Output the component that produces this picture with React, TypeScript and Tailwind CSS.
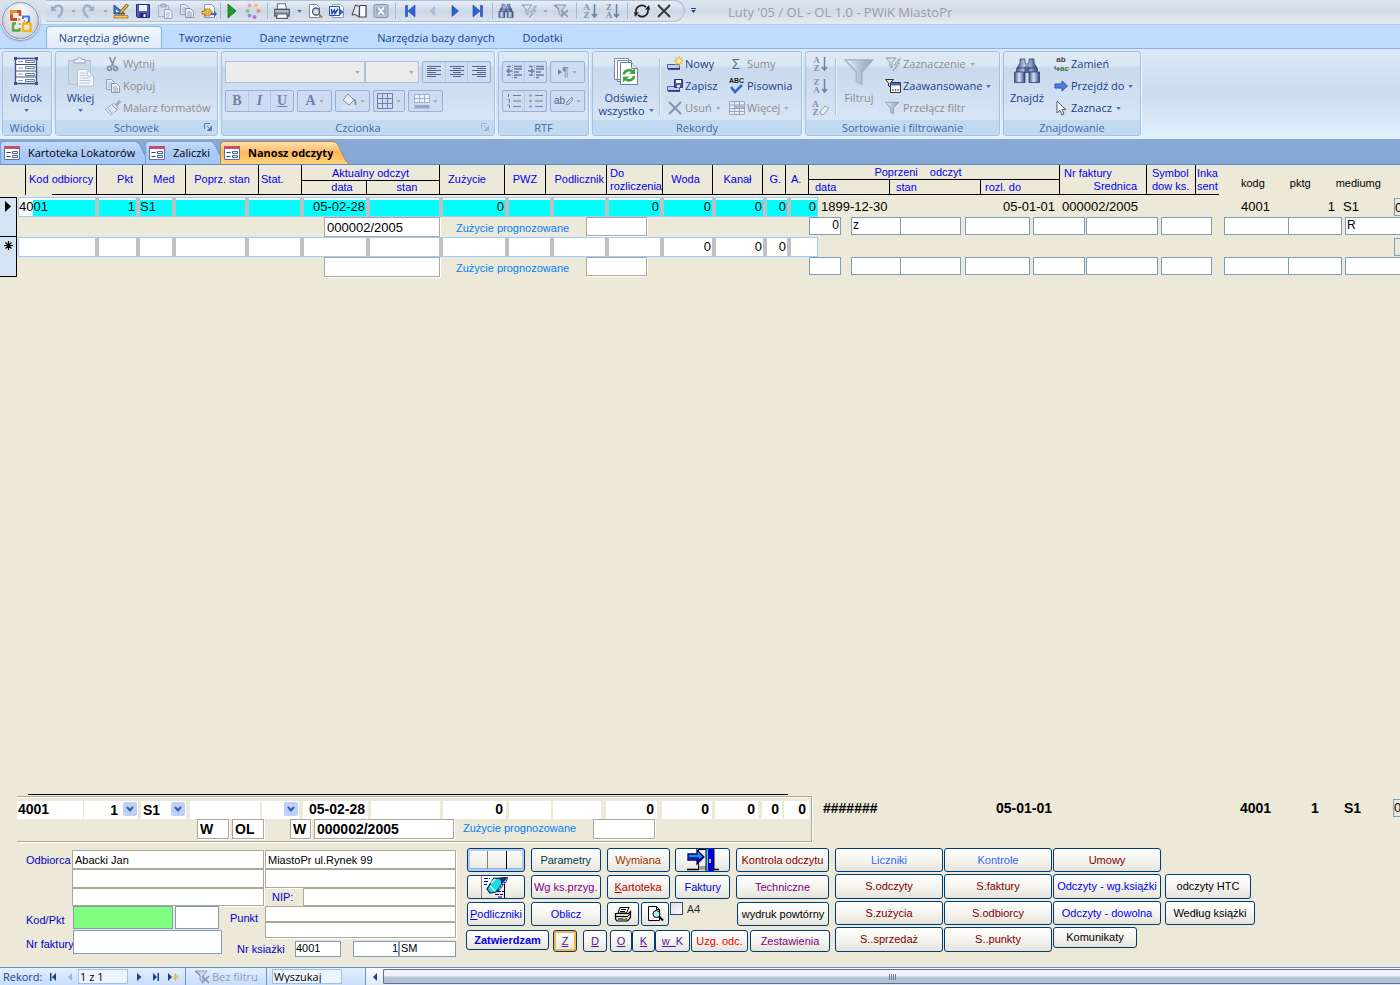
import type { ReactNode } from "react";

/* ---------- shared class strings ---------- */
const RIBBON_FONT = "font-['Open_Sans','Noto_Sans',sans-serif]";
const SUNKEN = "border-t border-l border-[#aca899] shadow-[1px_1px_0_#fff,inset_-1px_-1px_0_#aca899] bg-white";
const FLAT = "border border-[#7f9db9] bg-white";

/* ---------- icons ---------- */
type IconProps = { children: ReactNode; vb?: string; className?: string };
const Svg = ({ children, vb = "0 0 16 16", className = "size-4" }: IconProps) => (
  <svg viewBox={vb} className={`${className} shrink-0`} fill="none" aria-hidden="true">
    {children}
  </svg>
);
const Caret = ({ className = "text-[#4a6fae]" }: { className?: string }) => (
  <svg viewBox="0 0 6 4" className={`h-[3px] w-[5px] shrink-0 ${className}`} aria-hidden="true">
    <path d="M0 0h6L3 4z" fill="currentColor" />
  </svg>
);

const Undo = () => (
  <Svg>
    <path d="M2 2.500v5.500h6z" fill="#9aabc6" />
    <path d="M4 6C6 3 9 2 11 3C14.500 4.500 14 10 9 14.500" stroke="#9aabc6" strokeWidth="2.400" />
  </Svg>
);
const Redo = () => (
  <Svg>
    <path d="M13 2.500v5.500H7.500z" fill="#9fb0c8" />
    <path d="M11 6C9 3 6.500 2 4.500 3C1.500 5 2 10 7 14.500" stroke="#9fb0c8" strokeWidth="2.400" />
  </Svg>
);
const Design = () => (
  <Svg>
    <path d="M1 2v9h11z" fill="#4274c8" stroke="#23509e" />
    <path d="M3 6.500V9h3z" fill="#fff" />
    <path d="M7 8.500 13.500 1l2 1.500L9 10l-3 1z" fill="#f7b13c" stroke="#5b4312" strokeWidth=".8" />
    <path d="M1 12.500h14v2.500H1z" fill="#f7c64a" stroke="#a3741b" strokeWidth=".8" />
  </Svg>
);
const Save = () => (
  <Svg>
    <path d="M1.500 1.500h13v13h-12l-1-1z" fill="#5358c4" stroke="#2a2c86" />
    <path d="M4 2h8v6H4z" fill="#eef1fb" />
    <path d="M4.500 10h7v4.500h-7z" fill="#2b2d6c" />
    <path d="M8.500 11h2v3h-2z" fill="#e8ebf7" />
  </Svg>
);
const PasteSm = () => (
  <Svg>
    <path d="M1.500 2.500h10v11h-10z" fill="#d3dbe6" stroke="#a3b0c2" />
    <path d="M4 1h5v3H4z" fill="#b8c2d0" stroke="#8e9cb0" strokeWidth=".7" />
    <path d="M7.500 6.500h5l2.500 2.500v6.500H7.500z" fill="#eef2f8" stroke="#95a4ba" />
    <path d="M9 10h4M9 12h4M9 14h3" stroke="#a9b6ca" />
  </Svg>
);
const Copy = () => (
  <Svg>
    <path d="M1.500 1.500h5l3 3v7h-8z" fill="#e6ebf3" stroke="#8fa0ba" />
    <path d="M3 5h4M3 7h4M3 9h4" stroke="#a2b0c6" />
    <path d="M6.500 5.500h5l3 3v6h-8z" fill="#eef2f8" stroke="#8497b6" />
    <path d="M8 9h4M8 11h5M8 13h5" stroke="#8fa0ba" />
  </Svg>
);
const Export = () => (
  <Svg>
    <path d="M3.500 1.500h7l3 3v10h-10z" fill="#fbfcff" stroke="#8696b5" />
    <path d="M1 8h3V6h5v2h2v3H9v2H4v-2H1z" fill="#f6c443" stroke="#9a6f14" strokeWidth=".8" />
    <path d="M5.500 8.500h2v2h-2z" fill="#fff" stroke="#9a6f14" strokeWidth=".6" />
    <path d="M10 10h3V7.500l3 3.500-3 3.500V12h-3z" fill="#3f63b8" />
  </Svg>
);
const Run = () => (
  <Svg>
    <path d="M4 1v14l8-7z" fill="#1e9a2c" stroke="#0c6a18" strokeWidth=".8" />
  </Svg>
);
const Dots = () => (
  <Svg>
    <circle cx="4.500" cy="2.500" r="2" fill="#f4a0a0" />
    <circle cx="11" cy="2.500" r="2" fill="#f6c55f" />
    <circle cx="2.500" cy="8" r="2" fill="#88c86c" />
    <circle cx="13.500" cy="8" r="2" fill="#f08a8a" />
    <circle cx="4.500" cy="12.500" r="2" fill="#6aa2ea" />
    <circle cx="9.500" cy="14" r="2" fill="#d860d8" />
  </Svg>
);
const Printer = () => (
  <Svg className="size-[18px]">
    <path d="M4 1.500h7l1 5H4z" fill="#fff" stroke="#6a7484" />
    <path d="M1.500 6.500h13v6h-13z" fill="#8d96a5" stroke="#4c5564" />
    <path d="M2 8h12" stroke="#d4d9e0" />
    <path d="M4 10.500h8l1 4H3z" fill="#fff" stroke="#5b6474" />
  </Svg>
);
const Preview = () => (
  <Svg>
    <path d="M2.500 1.500h7l3 3v10h-10z" fill="#fff" stroke="#77869c" />
    <circle cx="9" cy="8.500" r="3.500" fill="#cbe4f8" stroke="#46536a" strokeWidth="1.300" />
    <path d="m11.500 11 3.500 3.500" stroke="#b07a3c" strokeWidth="2" />
  </Svg>
);
const Word = () => (
  <Svg>
    <path d="M3.500 1.500h8l3 3v10h-11z" fill="#fff" stroke="#8aa0c4" />
    <path d="M.500 3.500h10v9H.500z" fill="#e6eefb" stroke="#2f56a6" />
    <path d="m2.500 6 .500 4.500L5.500 7l.500 3.500L9 6" stroke="#1f4aa6" strokeWidth="1.400" />
    <path d="m11 6 4 3-4 3z" fill="#3668c6" />
  </Svg>
);
const Book = () => (
  <Svg>
    <path d="M8.500 3v11H15V2.500H9.500z" fill="#fff" stroke="#3c4656" strokeWidth="1.200" />
    <path d="M8.500 3.500 4.500 2 1 12l3-.5L8 14z" fill="#dfe5ee" stroke="#3c4656" />
  </Svg>
);
const Excel = () => (
  <Svg>
    <rect x="1" y="1.500" width="14" height="13" rx="1.500" fill="#b9c4d4" stroke="#8292ab" />
    <path d="M3 4h10v8H3z" fill="#9dabc0" />
    <path d="m5 4.500 6 7M11 4.500l-6 7" stroke="#fff" strokeWidth="1.800" />
  </Svg>
);
const First = () => (
  <Svg>
    <path d="M3.500 2.500h2v11h-2zM13 2v12L6 8z" fill="#2b63d4" stroke="#1946a8" strokeWidth=".6" />
  </Svg>
);
const Prev = () => (
  <Svg>
    <path d="M11 3v10L5.500 8z" fill="#a9bbd6" />
  </Svg>
);
const Next = () => (
  <Svg>
    <path d="M5 2.500v11l6.500-5.500z" fill="#2b63d4" stroke="#1946a8" strokeWidth=".6" />
  </Svg>
);
const Last = () => (
  <Svg>
    <path d="M10.500 2.500h2v11h-2zM3 2v12l7-6z" fill="#2b63d4" stroke="#1946a8" strokeWidth=".6" />
  </Svg>
);
const Binoculars = ({ className = "size-4" }: { className?: string }) => (
  <Svg className={className} vb="0 0 28 28">
    <defs>
      <linearGradient id="bino" x1="0" x2="1" y1="0" y2="0">
        <stop offset="0" stopColor="#3b5488" />
        <stop offset=".45" stopColor="#d7e2f6" />
        <stop offset="1" stopColor="#2c4374" />
      </linearGradient>
    </defs>
    <path d="M7 2h5v4h1v4h2V6h1V2h5v4l3 5v1H4v-1l3-5z" fill="url(#bino)" stroke="#2c4374" strokeWidth=".8" />
    <path d="M11 10h6v6h-6z" fill="#53699a" />
    <path d="M4 11h8v5H3zM16 11h8l1 5h-9z" fill="url(#bino)" stroke="#2c4374" strokeWidth=".8" />
    <path d="M1.500 15h10.500v10.500H1.500z" fill="url(#bino)" stroke="#2c4374" strokeWidth=".8" />
    <path d="M16 15h10.500v10.500H16z" fill="url(#bino)" stroke="#2c4374" strokeWidth=".8" />
  </Svg>
);
const FilterBolt = () => (
  <Svg>
    <path d="M1 2h10L7 6.500V12l-2-1.500v-4z" fill="#dce4ee" stroke="#8997ad" />
    <path d="M13.500 3 9.500 9H12l-4 6 7-7.500h-2.500l3-4.500z" fill="#cdd6e3" stroke="#8b99b0" strokeWidth=".8" />
  </Svg>
);
const FilterX = () => (
  <Svg>
    <path d="M2 2h11L9 7v6l-3-2V7z" fill="#cfd8e4" stroke="#8997ad" />
    <path d="m8 7 7 7M15 7l-7 7M1 2l5 4" stroke="#8997ad" strokeWidth="1.600" />
  </Svg>
);
const Funnel = ({ className = "size-4", outline = "#a3b0c4" }: { className?: string; outline?: string }) => (
  <Svg className={className}>
    <defs>
      <linearGradient id="fun" x1="0" x2="1" y1="0" y2="0">
        <stop offset="0" stopColor="#f0f3f8" />
        <stop offset=".5" stopColor="#b9c4d4" />
        <stop offset="1" stopColor="#94a3ba" />
      </linearGradient>
    </defs>
    <path d="M.500 1.500h15L9.500 8v6.500L6.500 13V8z" fill="url(#fun)" stroke={outline} strokeWidth=".7" />
  </Svg>
);
const SortIcon = ({ a, b, erase = false }: { a: string; b: string; erase?: boolean }) => (
  <span className="flex items-center text-[#7f8fa9]">
    <span className="flex flex-col font-['Liberation_Serif',serif] text-[9px] leading-[8px] font-bold">
      <span>{a}</span>
      <span>{b}</span>
    </span>
    {erase ? (
      <svg viewBox="0 0 10 16" className="h-4 w-[10px]" fill="none" aria-hidden="true">
        <path d="m1 12 5-6 3.500 2-4.500 6.500H2z" fill="#eef1f6" stroke="#8d9cb5" />
      </svg>
    ) : (
      <svg viewBox="0 0 8 16" className="h-4 w-2" fill="none" aria-hidden="true">
        <path d="M4.500 1v12M2 11l2.500 3L7 11" stroke="#6c80a2" strokeWidth="1.500" />
      </svg>
    )}
  </span>
);
const Refresh = () => (
  <Svg>
    <path d="M2 9a6 6 0 0 1 10-5M14 7a6 6 0 0 1-10 5" stroke="#1e1e1e" strokeWidth="1.700" />
    <path d="m11 6.500 5 .500-1-5zM5 9.500 0 9l1 5z" fill="#1e1e1e" />
  </Svg>
);
const Cross = ({ color = "#3a3a3a" }: { color?: string }) => (
  <Svg>
    <path d="m2 2 12 12M14 2 2 14" stroke={color} strokeWidth="2" />
  </Svg>
);
const Scissors = () => (
  <Svg>
    <path d="m4.500 1 4 9M10.500 1l-4 9" stroke="#7d8ba3" strokeWidth="1.500" />
    <circle cx="4.500" cy="12.500" r="2" stroke="#7d8ba3" strokeWidth="1.500" />
    <circle cx="10.500" cy="12.500" r="2" stroke="#7d8ba3" strokeWidth="1.500" />
  </Svg>
);
const Brush = () => (
  <Svg>
    <path d="m10 5 4-4.500 1.500 1.500-4 4.500z" fill="#a4b0c3" stroke="#8593aa" strokeWidth=".7" />
    <path d="m6 5 3-1.500L12.500 7 12 10 6 15 .500 9.500z" fill="#e2e8f1" stroke="#8f9eb6" strokeWidth=".8" />
    <path d="m7 5 5 5M3 9l4 4" stroke="#8f9eb6" />
  </Svg>
);
const ViewForm = () => (
  <Svg vb="0 0 26 28" className="h-7 w-[26px]">
    <path d="M2.500 1.500h21v25h-21z" fill="#fff" stroke="#3c5486" strokeWidth="1.400" />
    <path d="M2.500 7.500h21M2.500 14h21M2.500 20h21" stroke="#3c5486" strokeWidth="1.200" />
    <path d="M5 4.500h5M5 11h5M5 17h5M5 23.500h5" stroke="#8a98b4" />
    <path d="M12.500 3.500h9v2h-9zM12.500 9.500h9v2h-9zM12.500 16.500h9v2h-9zM12.500 22.500h9v2h-9z" fill="#eef2fa" stroke="#6c7fa8" />
    <path d="M1 0h3v3H1zM22 0h3v3h-3zM1 25h3v3H1zM22 25h3v3h-3z" fill="#3c5486" />
  </Svg>
);
const PasteBig = () => (
  <Svg vb="0 0 28 30" className="h-[30px] w-7">
    <path d="M1.500 3.500h22v24h-22z" fill="#cbd8ea" stroke="#b2c2d9" />
    <path d="M7 2.500h3a2.500 2 0 0 1 5 0h3v3.500H7z" fill="#eef1f6" stroke="#96a5bc" />
    <path d="M10.500 12.500H20l6.500 6.500v10h-16z" fill="#f4f7fb" stroke="#b4c1d5" />
    <path d="M20 12.500V19h6.500" stroke="#b4c1d5" />
    <path d="M12.500 16h6M12.500 18.500h6M12.500 21h11M12.500 23.500h11M12.500 26h11" stroke="#b9c6d9" />
  </Svg>
);
const RefreshBig = () => (
  <Svg vb="0 0 26 29" className="h-[29px] w-[26px]">
    <path d="M1.500 1.500h14v21h-14zM4.500 3.500h14v21h-14z" fill="#fafbfd" stroke="#7d8ba5" />
    <path d="M7.500 5.500h11l6 6v16h-17z" fill="#fff" stroke="#6f7f9c" />
    <path d="M18.500 5.500v6h6" fill="#dbe3ef" stroke="#6f7f9c" />
    <path d="M11 17.500a5 4.500 0 0 1 8.500-3M21 19a5 4.500 0 0 1-8.500 3" stroke="#3aa640" strokeWidth="2.600" />
    <path d="M16 17h6v-6zM16 19.500h-6v6z" fill="#3aa640" />
  </Svg>
);
const RecNew = () => (
  <Svg>
    <path d="M.500 8.500h12v4H.500z" fill="#bcd2f4" stroke="#4a63a0" />
    <path d="M1 13h12" stroke="#1d2f5e" strokeWidth="1.600" />
    <path d="M12 0v10M7 5h9M8.500 1.500l7 7M15.500 1.500l-7 7" stroke="#f0b92e" strokeWidth="1.300" />
    <circle cx="12" cy="5" r="2" fill="#fff3a0" />
  </Svg>
);
const RecSave = () => (
  <Svg>
    <path d="M.500 8.500h12v4H.500z" fill="#bcd2f4" stroke="#4a63a0" />
    <path d="M1 13h12" stroke="#1d2f5e" strokeWidth="1.600" />
    <path d="M7.500 1.500h8v8h-8z" fill="#5358a8" stroke="#2c3070" />
    <path d="M9 2h5v3H9z" fill="#fff" />
    <path d="M10 7h3v2.500h-3z" fill="#dfe3f2" />
  </Svg>
);
const Abc = () => (
  <span className="flex w-[18px] flex-col items-start">
    <span className="font-['Liberation_Sans',sans-serif] text-[7px] leading-[6px] font-bold text-[#222]">ABC</span>
    <svg viewBox="0 0 14 10" className="h-[10px] w-[14px]" fill="none" aria-hidden="true">
      <path d="m2 3 4 5 7-7" stroke="#3568c8" strokeWidth="2.600" />
    </svg>
  </span>
);
const GridMore = () => (
  <Svg>
    <path d="M.500 1.500h15v13H.500z" fill="#e8ecf3" stroke="#9aa8be" />
    <path d="M.500 5h15M.500 8.500h15M.500 11.500h15M5.500 1.500v13M10.500 1.500v13" stroke="#9aa8be" />
    <path d="M6 5.500h9v2.500H6z" fill="#a9b6ca" />
  </Svg>
);
const Advanced = () => (
  <Svg>
    <path d="M5.500 4.500h10v10h-10z" fill="#fff" stroke="#333" />
    <path d="M6 5h9v2.500H6z" fill="#3a6fd0" />
    <path d="M.500 1.500h8L5.500 5v4L3.500 8V5z" fill="#e8ecf2" stroke="#333" />
    <path d="M7.500 12h1.300M10 12h1.300M12.500 12h1.300" stroke="#333" strokeWidth="1.300" />
  </Svg>
);
const GoTo = () => (
  <Svg>
    <path d="M2 6h7V3l5.500 5L9 13v-3H2z" fill="#4f80dc" stroke="#2a55ac" strokeWidth="1" />
  </Svg>
);
const Cursor = () => (
  <Svg>
    <path d="M4 1v12l3-2.500L9 15l2-1-2-4.300h4z" fill="#fff" stroke="#4c5a74" />
  </Svg>
);
const Replace = () => (
  <span className="flex w-4 flex-col font-['Liberation_Sans',sans-serif] text-[8px] leading-[9px] font-bold">
    <span className="text-[#444]">ab</span>
    <span className="flex items-center justify-end text-[#22852c]">
      <svg viewBox="0 0 6 6" className="size-[6px]" fill="none" aria-hidden="true">
        <path d="M1 0v3h4M3.500 1 5.500 3l-2 2" stroke="#444" />
      </svg>
      ac
    </span>
  </span>
);
const Lines = ({ kind }: { kind: "left" | "center" | "right" }) => {
  const d = {
    left: "M1 2.500h14M1 4.500h9M1 6.500h14M1 8.500h9M1 10.500h14M1 12.500h9",
    center: "M1 2.500h14M4 4.500h8M1 6.500h14M4 8.500h8M1 10.500h14M4 12.500h8",
    right: "M1 2.500h14M6 4.500h9M1 6.500h14M6 8.500h9M1 10.500h14M6 12.500h9",
  }[kind];
  return (
    <Svg>
      <path d={d} stroke="#51648c" />
    </Svg>
  );
};
const Indent = ({ dir }: { dir: "in" | "out" }) => (
  <Svg>
    <path d="M1 2.500h4M8 2.500h8M8 5h8M8 8h5M1 11h4M8 11h8M8 13.500h3" stroke="#6a7da3" strokeWidth="1.400" />
    <path d={dir === "out" ? "M6 7H1m2.500-2.500L1 7l2.500 2.500" : "M0 7h5M3 4.500 5.500 7 3 9.500"} stroke="#6a7da3" strokeWidth="1.300" />
    <path d="M6.500 1v14" stroke="#8fa0c0" strokeDasharray="1 1" />
  </Svg>
);
const ListNum = () => (
  <Svg>
    <path d="M2.500 1v3M1.500 6.500h2v3M1.500 12h2v3M7 2.500h8M7 8h8M7 13.500h8" stroke="#6a7da3" />
  </Svg>
);
const ListDot = () => (
  <Svg>
    <path d="M7 2.500h8M7 8h8M7 13.500h8" stroke="#6a7da3" />
    <circle cx="2.500" cy="2.500" r="1.300" fill="#8696b5" />
    <circle cx="2.500" cy="8" r="1.300" fill="#8696b5" />
    <circle cx="2.500" cy="13.500" r="1.300" fill="#8696b5" />
  </Svg>
);
const Bucket = () => (
  <Svg>
    <path d="m7 1 6 6-5 5-6-5z" fill="#e9edf4" stroke="#8191ad" />
    <path d="M12 6c3 1 3 3 2.500 6" stroke="#8191ad" strokeWidth="1.600" />
    <path d="M1 13h13v2.500H1z" fill="#dfe6f0" />
  </Svg>
);
const GridIcon = () => (
  <Svg>
    <path d="M.500.500h15v15H.500zM.500 5.500h15M.500 10.500h15M5.500.500v15M10.500.500v15" stroke="#6f82a6" />
  </Svg>
);
const AltRows = () => (
  <Svg>
    <path d="M.500 1.500h15v8H.500zM.500 5.500h15M5.500 1.500v8M10.500 1.500v8" fill="#eef1f7" stroke="#a2b0c8" />
    <path d="M.500 12h15v3.500H.500z" fill="#97a7c1" />
  </Svg>
);
const Highlighter = () => (
  <span className="flex items-center font-['Liberation_Sans',sans-serif] text-[10px] leading-4 text-[#51648c]">
    ab
    <svg viewBox="0 0 8 10" className="h-[10px] w-2" fill="none" aria-hidden="true">
      <path d="M7 1 2 6l-1 3 3-1 3.500-4z" fill="#cbd5e4" stroke="#7d8eac" />
    </svg>
  </span>
);
const ParaDir = () => (
  <span className="flex items-center font-['Liberation_Sans',sans-serif] text-[12px] leading-4 text-[#7385a6]">
    <svg viewBox="0 0 4 6" className="h-[6px] w-1" aria-hidden="true">
      <path d="M0 0v6l4-3z" fill="currentColor" />
    </svg>
    ¶
  </span>
);
const Launcher = ({ dim = false }: { dim?: boolean }) => (
  <Svg vb="0 0 8 8" className="size-2">
    <path d="M.500 6V.500H6M7.500 3v4.500H3M3 3l3 3M6.500 4v2.500H4" stroke={dim ? "#9db1d0" : "#5a76a8"} />
  </Svg>
);
const FormIcon = () => (
  <Svg className="h-[14px] w-4" vb="0 0 16 14">
    <path d="M.500.500h15v13H.500z" fill="#fff" stroke="#5b6f9c" />
    <path d="M0 0h16v3H0z" fill="#c2506a" />
    <path d="M2.500 6.500h4M2.500 10.500h4" stroke="#33405e" />
    <path d="M8.500 5.500h5v2h-5zM8.500 9.500h5v2h-5z" stroke="#4a65a4" />
  </Svg>
);
const OfficeLogo = () => (
  <Svg vb="0 0 24 24" className="size-6">
    <path d="M8 10.500H2.500V2.500h8.500V7" stroke="#d9481a" strokeWidth="2.800" strokeLinejoin="round" />
    <path d="M2.500 6V2.500H8" stroke="#f08a2c" strokeWidth="2.800" strokeLinejoin="round" />
    <path d="M14 10V7.500h6v6h-3" stroke="#3f7fd0" strokeWidth="2.200" strokeLinejoin="round" />
    <path d="M7 14.500H4v7h6.500V19" stroke="#5fa633" strokeWidth="2.400" strokeLinejoin="round" />
    <path d="M14 17v-2.500h7.500v7.500H14z" stroke="#f3b51d" strokeWidth="2.600" strokeLinejoin="round" />
    <path d="M9 10.500h2.500M10.500 14v2M14.500 12h1.500" stroke="#e8762c" strokeWidth="1.800" />
  </Svg>
);

/* ---------- title bar ---------- */
type QatItem = { label: string; w: string; icon?: ReactNode; off?: boolean };
const SEP = <span className="h-4 w-px bg-[#9db9dd]" />;
const qat: QatItem[] = [
  { label: "Cofnij", w: "w-[22px]", icon: <Undo />, off: true },
  { label: "Lista cofania", w: "w-[10px]", icon: <Caret className="text-[#a7a7a7]" />, off: true },
  { label: "Ponów", w: "w-[22px]", icon: <Redo />, off: true },
  { label: "Lista ponawiania", w: "w-[10px]", icon: <Caret className="text-[#a7a7a7]" />, off: true },
  { label: "Projekt", w: "w-[22px]", icon: <Design /> },
  { label: "Zapisz", w: "w-[22px]", icon: <Save /> },
  { label: "Wklej", w: "w-[22px]", icon: <PasteSm />, off: true },
  { label: "Kopiuj", w: "w-[22px]", icon: <Copy />, off: true },
  { label: "Eksportuj", w: "w-[22px]", icon: <Export /> },
  { label: "", w: "w-px" },
  { label: "Uruchom", w: "w-[21px]", icon: <Run /> },
  { label: "Kolory", w: "w-[22px]", icon: <Dots /> },
  { label: "", w: "w-[6px]" },
  { label: "Drukuj", w: "w-6", icon: <Printer /> },
  { label: "Opcje druku", w: "w-[10px]", icon: <Caret /> },
  { label: "Podgląd", w: "w-[22px]", icon: <Preview /> },
  { label: "Word", w: "w-[22px]", icon: <Word /> },
  { label: "Książka", w: "w-[22px]", icon: <Book /> },
  { label: "Excel", w: "w-[22px]", icon: <Excel />, off: true },
  { label: "", w: "w-[6px]" },
  { label: "Pierwszy", w: "w-[23px]", icon: <First /> },
  { label: "Poprzedni", w: "w-[22px]", icon: <Prev />, off: true },
  { label: "Następny", w: "w-[23px]", icon: <Next /> },
  { label: "Ostatni", w: "w-[23px]", icon: <Last /> },
  { label: "", w: "w-[6px]" },
  { label: "Znajdź", w: "w-[22px]", icon: <Binoculars /> },
  { label: "Filtruj zaznaczenie", w: "w-6", icon: <FilterBolt />, off: true },
  { label: "Opcje filtru", w: "w-[8px]", icon: <Caret className="text-[#a7a7a7]" />, off: true },
  { label: "Usuń filtr", w: "w-6", icon: <FilterX />, off: true },
  { label: "", w: "w-[6px]" },
  { label: "Sortuj rosnąco", w: "w-[23px]", icon: <SortIcon a="A" b="Z" /> },
  { label: "Sortuj malejąco", w: "w-[22px]", icon: <SortIcon a="Z" b="A" /> },
  { label: "", w: "w-[6px]" },
  { label: "Odśwież", w: "w-6", icon: <Refresh /> },
  { label: "Zamknij", w: "w-5", icon: <Cross /> },
];

const TitleBar = () => (
  <header className="flex h-[25px] items-start border-b border-[#b6cbe4] bg-linear-to-b from-[#dbe3ee] via-[#d3dde9] to-[#e4ebf2] pl-[46px]">
    <div className="flex h-[22px] shrink-0 items-center rounded-r-full border border-l-0 border-[#aebfd6] bg-linear-to-b from-[#e8eef6] via-[#cdd8e6] to-[#d9e3ee] pr-[10px] shadow-[0_1px_0_#f4f8fc]">
      {qat.map((q, i) =>
        q.icon ? (
          <button key={i} type="button" aria-label={q.label} disabled={q.off} className={`flex h-5 shrink-0 items-center justify-center ${q.w}`}>
            {q.icon}
          </button>
        ) : (
          <span key={i} className={`flex shrink-0 justify-center ${q.w}`}>
            {SEP}
          </span>
        ),
      )}
    </div>
    <button type="button" aria-label="Dostosuj pasek" className="ml-[6px] flex h-5 flex-col items-center justify-center gap-px">
      <span className="h-px w-[5px] bg-[#15428b]" />
      <Caret className="text-[#15428b]" />
    </button>
    <h1 className="ml-8 truncate pt-[2px] text-[13px] leading-5 text-[#9a9da3]">Luty '05 / OL - OL 1.0 - PWiK MiastoPr</h1>
  </header>
);

/* ---------- ribbon ---------- */
const RibbonTabs = () => (
  <nav className="flex h-[23px] items-end bg-[#bfdbff] pl-[46px] text-[11px] leading-5 text-[#15428b]">
    <button type="button" className="h-[22px] w-[116px] rounded-t border border-b-0 border-[#8db2e3] bg-linear-to-b from-[#f3f8fd] to-[#dfeaf7] pt-px shadow-[0_0_3px_#9fe4f7]">
      Narzędzia główne
    </button>
    <button type="button" className="ml-[3px] h-[22px] w-20 pt-[2px]">Tworzenie</button>
    <button type="button" className="h-[22px] w-[118px] pt-[2px]">Dane zewnętrzne</button>
    <button type="button" className="h-[22px] w-[146px] pt-[2px]">Narzędzia bazy danych</button>
    <button type="button" className="h-[22px] w-[67px] pt-[2px]">Dodatki</button>
  </nav>
);

type GroupProps = { title: string; w: string; children: ReactNode; launcher?: "on" | "dim" };
const Group = ({ title, w, children, launcher }: GroupProps) => (
  <section
    className={`flex h-[85px] shrink-0 flex-col overflow-hidden rounded-[3px] border border-[#a3c2e2] bg-linear-to-b from-[#dde8f5] from-15% via-[#c9d9ed] via-20% to-[#dbe8f6] shadow-[1px_1px_0_#eef6fd] ${w}`}
  >
    <div className="flex h-[68px] shrink-0">{children}</div>
    <h2 className="relative flex flex-1 items-center justify-center bg-[#c1d9f1] text-[11px] leading-3 text-[#3e6aaa]">
      {title}
      {launcher && (
        <button type="button" aria-label={`${title} - opcje`} className="absolute top-[3px] right-[5px]">
          <Launcher dim={launcher === "dim"} />
        </button>
      )}
    </h2>
  </section>
);

const BigButton = ({ icon, lines, w, caret, off }: { icon: ReactNode; lines: string[]; w: string; caret?: "below" | "inline"; off?: boolean }) => (
  <button type="button" disabled={off} className={`flex shrink-0 flex-col items-center pt-[5px] text-[11px] leading-[13px] ${off ? "text-[#8d8d8d]" : "text-[#15428b]"} ${w}`}>
    <span className="flex h-[34px] items-start justify-center">{icon}</span>
    {lines.map((l, i) => (
      <span key={l} className="flex items-center gap-1 whitespace-nowrap">
        {l}
        {caret === "inline" && i === lines.length - 1 && <Caret />}
      </span>
    ))}
    {caret === "below" && (
      <span className="mt-[5px]">
        <Caret />
      </span>
    )}
  </button>
);

const SmallButton = ({ icon, label, off, caret }: { icon: ReactNode; label: string; off?: boolean; caret?: boolean }) => (
  <button type="button" disabled={off} className={`flex h-[22px] items-center text-[11px] whitespace-nowrap ${off ? "text-[#8d8d8d]" : "text-[#15428b]"}`}>
    <span className="flex w-[18px] justify-start">{icon}</span>
    {label}
    {caret && (
      <span className="ml-1">
        <Caret className={off ? "text-[#a7a7a7]" : "text-[#4a6fae]"} />
      </span>
    )}
  </button>
);

const Divider = () => <span className="mt-[6px] h-14 w-px bg-[#a9c0de] shadow-[1px_0_0_#eef5fc]" />;

const Strip = ({ w, children }: { w: string; children: ReactNode }) => (
  <div className={`flex h-[22px] shrink-0 divide-x divide-[#b5cae6] rounded-xs border border-[#93b1dc] bg-[#cddcf0] ${w}`}>{children}</div>
);
const Tool = ({ label, children, caret }: { label: string; children: ReactNode; caret?: boolean }) => (
  <button type="button" disabled aria-label={label} className="flex flex-1 items-center justify-center gap-[3px] font-['Liberation_Serif',serif] text-[14px] leading-4 text-[#6f82a6]">
    {children}
    {caret && <Caret className="text-[#a9a9a9]" />}
  </button>
);
const FontSelect = ({ w, label }: { w: string; label: string }) => (
  <span className={`relative flex items-center justify-end ${w}`}>
    <select disabled aria-label={label} className="h-[22px] w-full appearance-none border border-[#b3c0d4] bg-[#ececec]">
      <option></option>
    </select>
    <span className="pointer-events-none absolute right-[5px]">
      <Caret className="text-[#a7a7a7]" />
    </span>
  </span>
);

const Ribbon = () => (
  <div className="flex h-[91px] gap-[3px] overflow-hidden border-t border-[#8db2e3] bg-linear-to-b from-[#dce9f8] via-[#cbdcf0] to-[#e2f1fc] px-[2px] pt-[2px] shadow-[0_1px_0_#7f9cc6]">
    <Group title="Widoki" w="w-[50px]">
      <BigButton icon={<ViewForm />} lines={["Widok"]} w="w-[46px]" caret="below" />
    </Group>
    <Group title="Schowek" w="w-[163px]" launcher="on">
      <BigButton icon={<PasteBig />} lines={["Wklej"]} w="w-[49px]" caret="below" />
      <div className="flex flex-col pt-px">
        <SmallButton icon={<Scissors />} label="Wytnij" off />
        <SmallButton icon={<Copy />} label="Kopiuj" off />
        <SmallButton icon={<Brush />} label="Malarz formatów" off />
      </div>
    </Group>
    <Group title="Czcionka" w="w-[274px]" launcher="dim">
      <div className="flex flex-col gap-[7px] px-[3px] pt-[9px]">
        <div className="flex">
          <FontSelect w="w-[140px]" label="Czcionka" />
          <FontSelect w="w-[54px]" label="Rozmiar czcionki" />
          <div className="ml-[3px] flex">
            <Strip w="w-[69px]">
              <Tool label="Do lewej"><Lines kind="left" /></Tool>
              <Tool label="Do środka"><Lines kind="center" /></Tool>
              <Tool label="Do prawej"><Lines kind="right" /></Tool>
            </Strip>
          </div>
        </div>
        <div className="flex gap-[3px]">
          <Strip w="w-[69px]">
            <Tool label="Pogrubienie"><b>B</b></Tool>
            <Tool label="Kursywa"><b className="italic">I</b></Tool>
            <Tool label="Podkreślenie"><b className="underline">U</b></Tool>
          </Strip>
          <Strip w="w-[35px]">
            <Tool label="Kolor czcionki" caret><b>A</b></Tool>
          </Strip>
          <Strip w="w-[35px]">
            <Tool label="Kolor wypełnienia" caret><Bucket /></Tool>
          </Strip>
          <Strip w="w-8">
            <Tool label="Linie siatki" caret><GridIcon /></Tool>
          </Strip>
          <Strip w="w-[35px]">
            <Tool label="Kolor naprzemienny" caret><AltRows /></Tool>
          </Strip>
        </div>
      </div>
    </Group>
    <Group title="RTF" w="w-[91px]">
      <div className="flex flex-col gap-[7px] px-[3px] pt-[9px]">
        <div className="flex gap-[3px]">
          <Strip w="w-[45px]">
            <Tool label="Zmniejsz wcięcie"><Indent dir="out" /></Tool>
            <Tool label="Zwiększ wcięcie"><Indent dir="in" /></Tool>
          </Strip>
          <Strip w="w-[35px]">
            <Tool label="Kierunek tekstu" caret><ParaDir /></Tool>
          </Strip>
        </div>
        <div className="flex gap-[3px]">
          <Strip w="w-[45px]">
            <Tool label="Numerowanie"><ListNum /></Tool>
            <Tool label="Punktory"><ListDot /></Tool>
          </Strip>
          <Strip w="w-[35px]">
            <Tool label="Wyróżnienie" caret><Highlighter /></Tool>
          </Strip>
        </div>
      </div>
    </Group>
    <Group title="Rekordy" w="w-[210px]">
      <BigButton icon={<RefreshBig />} lines={["Odśwież", "wszystko"]} w="w-[66px]" caret="inline" />
      <Divider />
      <div className="flex w-[62px] flex-col pt-px pl-[7px]">
        <SmallButton icon={<RecNew />} label="Nowy" />
        <SmallButton icon={<RecSave />} label="Zapisz" />
        <SmallButton icon={<Cross color="#8595b0" />} label="Usuń" off caret />
      </div>
      <div className="flex flex-col pt-px pl-[7px]">
        <SmallButton icon={<span className="pl-[3px] text-[14px] leading-4 text-[#51648c]">Σ</span>} label="Sumy" off />
        <SmallButton icon={<Abc />} label="Pisownia" />
        <SmallButton icon={<GridMore />} label="Więcej" off caret />
      </div>
    </Group>
    <Group title="Sortowanie i filtrowanie" w="w-[195px]">
      <div className="flex w-[29px] flex-col items-center pt-px">
        <button type="button" aria-label="Rosnąco" className="flex h-[22px] items-center"><SortIcon a="A" b="Z" /></button>
        <button type="button" aria-label="Malejąco" className="flex h-[22px] items-center"><SortIcon a="Z" b="A" /></button>
        <button type="button" aria-label="Wyczyść sortowanie" className="flex h-[22px] items-center"><SortIcon a="A" b="Z" erase /></button>
      </div>
      <Divider />
      <BigButton icon={<Funnel className="size-[30px]" />} lines={["Filtruj"]} w="w-[46px]" off />
      <div className="flex flex-col pt-px pl-[3px]">
        <SmallButton icon={<FilterBolt />} label="Zaznaczenie" off caret />
        <SmallButton icon={<Advanced />} label="Zaawansowane" caret />
        <SmallButton icon={<Funnel className="size-[14px]" outline="#74849f" />} label="Przełącz filtr" off />
      </div>
    </Group>
    <Group title="Znajdowanie" w="w-[138px]">
      <BigButton icon={<Binoculars className="size-7" />} lines={["Znajdź"]} w="w-[46px]" />
      <div className="flex flex-col pt-px pl-[3px]">
        <SmallButton icon={<Replace />} label="Zamień" />
        <SmallButton icon={<GoTo />} label="Przejdź do" caret />
        <SmallButton icon={<Cursor />} label="Zaznacz" caret />
      </div>
    </Group>
  </div>
);

/* ---------- document tabs ---------- */
const DocTab = ({ label, w, active, next }: { label: string; w: string; active?: boolean; next?: boolean }) => (
  <button type="button" className={`relative flex h-[23px] shrink-0 items-stretch text-[11px] ${w} ${next ? "-ml-[2px]" : ""}`}>
    <span
      className={`flex flex-1 items-center gap-2 rounded-tl border-t border-l pl-[3px] whitespace-nowrap text-black ${
        active ? "border-[#a9855a] bg-linear-to-b from-[#ffe0ac] via-[#ffb75b] to-[#ffd27e] font-bold" : "border-[#7f9fcf] bg-linear-to-b from-[#c6dcfa] via-[#a9caf5] to-[#a4c8f8]"
      }`}
    >
      <FormIcon />
      {label}
    </span>
    <svg viewBox="0 0 16 23" className="h-[23px] w-4 shrink-0" preserveAspectRatio="none" aria-hidden="true">
      <defs>
        <linearGradient id={active ? "tabA" : "tabB"} x1="0" x2="0" y1="0" y2="1">
          <stop offset="0" stopColor={active ? "#ffe0ac" : "#c6dcfa"} />
          <stop offset=".5" stopColor={active ? "#ffb75b" : "#a9caf5"} />
          <stop offset="1" stopColor={active ? "#ffd27e" : "#a4c8f8"} />
        </linearGradient>
      </defs>
      <path d="M0 .500C4 1 5 4 8 10C10.500 15 12 20 16 23H0z" fill={active ? "url(#tabA)" : "url(#tabB)"} />
      <path d="M0 .500C4 1 5 4 8 10C10.500 15 12 20 16 23" fill="none" stroke={active ? "#a9855a" : "#6f93c8"} />
    </svg>
  </button>
);

/* ---------- form header ---------- */
const Head = ({ w, children, className = "items-center justify-center" }: { w: string; children: ReactNode; className?: string }) => (
  <div className={`flex shrink-0 overflow-hidden border-b border-l border-black leading-[13px] whitespace-nowrap ${w} ${className}`}>{children}</div>
);

const FormHeader = () => (
  <div className="flex h-[30px] pl-[25px] text-[11px] text-[#0000f0]">
    <div className="flex w-[71px] shrink-0 flex-col border-l border-black pl-[3px] whitespace-nowrap">
      <span className="flex flex-1 items-center">Kod odbiorcy</span>
      <span className="ml-[23px] h-px bg-black" />
    </div>
    <Head w="w-[46px]" className="items-center justify-end pr-[9px]">Pkt</Head>
    <Head w="w-[43px]">Med</Head>
    <Head w="w-[73px]">Poprz. stan</Head>
    <Head w="w-[43px]" className="items-center pl-[2px]">Stat.</Head>
    <Head w="w-[138px]" className="flex-col">
      <span className="h-4 border-b border-black text-center leading-4">Aktualny odczyt</span>
      <span className="flex flex-1">
        <span className="flex w-16 items-center justify-center pl-4">data</span>
        <span className="flex flex-1 items-center justify-center border-l border-black pl-2">stan</span>
      </span>
    </Head>
    <Head w="w-[65px]" className="items-center justify-center pr-[10px]">Zużycie</Head>
    <Head w="w-[41px]">PWZ</Head>
    <Head w="w-[61px]" className="items-center justify-end pr-[2px]">Podlicznik</Head>
    <Head w="w-[56px]" className="flex-col justify-center pl-[3px] leading-[13px]">
      <span>Do</span>
      <span>rozliczenia</span>
    </Head>
    <Head w="w-[50px]" className="items-center justify-center pr-1">Woda</Head>
    <Head w="w-[50px]">Kanał</Head>
    <Head w="w-[23px]" className="items-center justify-end pr-1">G.</Head>
    <Head w="w-[23px]" className="items-center pl-[5px]">A.</Head>
    <Head w="w-[251px]" className="flex-col">
      <span className="flex h-[15px] items-center justify-center gap-3 border-b border-black pr-8">
        <span>Poprzeni</span>
        <span>odczyt</span>
      </span>
      <span className="flex flex-1">
        <span className="flex w-20 items-center pl-[6px]">data</span>
        <span className="flex w-[91px] items-center border-l border-black pl-[6px]">stan</span>
        <span className="flex flex-1 items-center border-l border-black pl-1">rozl. do</span>
      </span>
    </Head>
    <Head w="w-[87px]" className="flex-col justify-center pr-[9px] pl-1">
      <span>Nr faktury</span>
      <span className="self-end">Srednica</span>
    </Head>
    <Head w="w-[49px]" className="flex-col justify-center pl-[5px]">
      <span>Symbol</span>
      <span>dow ks.</span>
    </Head>
    <Head w="w-6" className="flex-col justify-center pl-px">
      <span>Inka</span>
      <span>sent</span>
    </Head>
    <div className="flex shrink-0 items-center gap-[25px] pt-[7px] pl-[22px] text-black">
      <span>kodg</span>
      <span>pktg</span>
      <span>mediumg</span>
    </div>
  </div>
);

/* ---------- records ---------- */
type Cell = { name: string; w: string; right?: boolean; value?: string; blank?: string };
const cells: Cell[] = [
  { name: "Kod odbiorcy", w: "w-[76px]", value: "4001" },
  { name: "Pkt", w: "w-[37px]", right: true, value: "1" },
  { name: "Med", w: "w-8", value: "S1" },
  { name: "Poprz. stan", w: "w-[69px]" },
  { name: "Stat.", w: "w-[51px]" },
  { name: "Data odczytu", w: "w-[62px]", right: true, value: "05-02-28" },
  { name: "Stan", w: "w-[69px]" },
  { name: "Zużycie", w: "w-[62px]", right: true, value: "0" },
  { name: "PWZ", w: "w-[41px]" },
  { name: "Podlicznik", w: "w-[51px]" },
  { name: "Do rozliczenia", w: "w-[51px]", right: true, value: "0" },
  { name: "Woda", w: "w-12", right: true, value: "0", blank: "0" },
  { name: "Kanał", w: "w-[47px]", right: true, value: "0", blank: "0" },
  { name: "G.", w: "w-5", right: true, value: "0", blank: "0" },
  { name: "A.", w: "w-[26px]", right: true, value: "0" },
];

const Record = ({ current }: { current?: boolean }) => (
  <div className="flex h-[40px]">
    <button
      type="button"
      aria-label={current ? "Bieżący rekord" : "Nowy rekord"}
      className={`flex w-[17px] shrink-0 items-start justify-center border-r border-b border-black bg-[#d5e4f2] ${current ? "border-t pt-[3px]" : "pt-px"}`}
    >
      {current ? (
        <svg viewBox="0 0 6 11" className="h-[11px] w-[6px]" aria-hidden="true">
          <path d="M0 0v11l6-5.500z" />
        </svg>
      ) : (
        <svg viewBox="0 0 11 11" className="mt-[2px] size-[11px]" fill="none" aria-hidden="true">
          <path d="M5.500 1v9M1 5.500h9M2.500 2.500l6 6M8.500 2.500l-6 6" stroke="#000" strokeWidth="1.200" />
        </svg>
      )}
    </button>
    <div className="flex min-w-0 flex-1 flex-col pl-px">
      <div className="flex h-5 items-center text-[13px] leading-4 text-black">
        <div className="flex h-5 shrink-0 gap-1 border border-[#99ccff] bg-[#c0c0c0]">
          {cells.map((c, i) => (
            <input
              key={c.name}
              aria-label={c.name}
              defaultValue={current ? c.value : c.blank}
              className={`h-[18px] min-w-0 border-t-2 border-white pb-[3px] ${c.w} ${c.right ? "pr-px text-right" : ""} ${
                current ? (i === 0 ? "bg-linear-to-r from-white from-[14px] to-[#00ffff] to-[14px]" : "bg-[#00ffff]") : "bg-white"
              }`}
            />
          ))}
        </div>
        {current && (
          <>
            <div className="ml-[3px] flex w-[234px] shrink-0 justify-between">
              <span>1899-12-30</span>
              <span>05-01-01</span>
            </div>
            <span className="ml-[7px] w-[179px] shrink-0">000002/2005</span>
            <div className="flex w-[94px] shrink-0 justify-between">
              <span>4001</span>
              <span>1</span>
            </div>
            <span className="ml-2 w-[51px] shrink-0">S1</span>
          </>
        )}
        <input aria-label="Kod" defaultValue={current ? "0" : ""} className={`h-[18px] w-10 shrink-0 border border-[#7f9db9] ${current ? "" : "ml-[576px]"}`} />
      </div>
      <div className="flex h-5 items-start text-[12px] leading-4 text-black">
        <input aria-label="Numer faktury" defaultValue={current ? "000002/2005" : ""} className={`ml-[306px] h-5 w-[116px] shrink-0 pl-[2px] text-[13px] ${SUNKEN}`} />
        <span className="ml-4 w-[130px] shrink-0 pt-[3px] text-[11px] text-[#0080ff]">Zużycie prognozowane</span>
        <input aria-label="Zużycie prognozowane" className={`h-[19px] w-[61px] shrink-0 ${SUNKEN}`} />
        <input aria-label="Licznik" defaultValue={current ? "0" : ""} className={`ml-[162px] h-[18px] w-8 shrink-0 pr-px pb-[2px] text-right ${FLAT}`} />
        <input aria-label="Znacznik" defaultValue={current ? "z" : ""} className={`ml-[10px] h-[18px] w-[50px] shrink-0 pb-[2px] pl-px ${FLAT}`} />
        <input aria-label="Poprzedni stan" className={`-ml-px h-[18px] w-[61px] shrink-0 ${FLAT}`} />
        <input aria-label="Rozliczenie do" className={`ml-1 h-[18px] w-[65px] shrink-0 ${FLAT}`} />
        <input aria-label="Rozliczenie" className={`ml-[3px] h-[18px] w-[52px] shrink-0 ${FLAT}`} />
        <input aria-label="Średnica" className={`ml-px h-[18px] w-[72px] shrink-0 ${FLAT}`} />
        <input aria-label="Symbol" className={`ml-[3px] h-[18px] w-[51px] shrink-0 ${FLAT}`} />
        <input aria-label="kodg" className={`ml-3 h-[18px] w-[65px] shrink-0 ${FLAT}`} />
        <input aria-label="pktg" className={`-ml-px h-[18px] w-[54px] shrink-0 ${FLAT}`} />
        <input aria-label="mediumg" defaultValue={current ? "R" : ""} className={`ml-[3px] h-[18px] w-[70px] shrink-0 pb-[2px] pl-px ${FLAT}`} />
      </div>
    </div>
  </div>
);

/* ---------- form footer ---------- */
type Foot = { name: string; w: string; value?: string; combo?: boolean; left?: boolean };
const foot: Foot[] = [
  { name: "Kod odbiorcy", w: "w-[66px]", value: "4001", left: true },
  { name: "Pkt", w: "ml-px w-[54px]", value: "1", combo: true },
  { name: "Med", w: "ml-[3px] w-[45px]", value: "S1", combo: true, left: true },
  { name: "Poprzedni stan", w: "ml-1 w-[70px]" },
  { name: "Stat.", w: "ml-[2px] w-[37px]", combo: true },
  { name: "Data", w: "ml-1 w-[65px]", value: "05-02-28" },
  { name: "Stan", w: "ml-[3px] w-[69px]" },
  { name: "Zużycie", w: "ml-[3px] w-[63px]", value: "0" },
  { name: "PWZ", w: "ml-[3px] w-[42px]" },
  { name: "Podlicznik", w: "ml-[2px] w-[48px]" },
  { name: "Do rozliczenia", w: "ml-[5px] w-[51px]", value: "0" },
  { name: "Woda", w: "ml-[5px] w-[50px]", value: "0" },
  { name: "Kanał", w: "ml-[3px] w-[43px]", value: "0" },
  { name: "G.", w: "ml-1 w-5", value: "0" },
  { name: "A.", w: "ml-[2px] w-[25px]", value: "0" },
];

const EditStrip = () => (
  <div className="flex items-start text-[14px] font-bold text-black">
    <div className="ml-[17px] h-[46px] w-[795px] shrink-0 border-t border-r border-b border-[#aca899] shadow-[1px_1px_0_#fff,inset_0_1px_0_#fff]">
      <div className="flex pt-1">
        {foot.map((f) =>
          f.combo ? (
            <span key={f.name} className={`relative flex h-[18px] shrink-0 ${f.w}`}>
              <select aria-label={f.name} className={`h-[18px] w-full appearance-none bg-white leading-[18px] ${f.left ? "pl-[2px]" : "pr-5 text-right"}`}>
                <option>{f.value ?? ""}</option>
              </select>
              <span className="pointer-events-none absolute top-px right-px flex size-[14px] items-center justify-center rounded-xs bg-[#bcd0fa]">
                <svg viewBox="0 0 8 6" className="h-[6px] w-2" fill="none" aria-hidden="true">
                  <path d="m1 1 3 3.500L7 1" stroke="#3a5a9a" strokeWidth="2" />
                </svg>
              </span>
            </span>
          ) : (
            <input key={f.name} aria-label={f.name} defaultValue={f.value} className={`h-[18px] shrink-0 bg-white ${f.w} ${f.left ? "pl-px" : "pr-[3px] text-right"}`} />
          ),
        )}
      </div>
      <div className="flex items-start">
        <input aria-label="Typ" defaultValue="W" className={`ml-[180px] h-5 w-8 shrink-0 pl-[2px] ${SUNKEN}`} />
        <input aria-label="Osiedle" defaultValue="OL" className={`ml-[3px] h-5 w-8 shrink-0 pl-[2px] ${SUNKEN}`} />
        <input aria-label="Rodzaj" defaultValue="W" className={`ml-[26px] h-5 w-[21px] shrink-0 pl-[2px] ${SUNKEN}`} />
        <input aria-label="Faktura" defaultValue="000002/2005" className={`ml-[3px] h-5 w-[140px] shrink-0 pl-[2px] ${SUNKEN}`} />
        <span className="ml-[9px] w-[130px] shrink-0 text-[11px] leading-[18px] font-normal text-[#0080ff]">Zużycie prognozowane</span>
        <input aria-label="Prognoza" className={`h-5 w-[62px] shrink-0 ${SUNKEN}`} />
      </div>
    </div>
    <div className="flex shrink-0 items-center pt-[2px] leading-5">
      <span className="ml-[11px] w-[173px]">#######</span>
      <span className="w-[244px]">05-01-01</span>
      <span className="w-[71px]">4001</span>
      <span className="w-[33px]">1</span>
      <span className="w-[49px]">S1</span>
      <input aria-label="Kod g" defaultValue="0" className="h-[18px] w-10 border border-[#7f9db9] text-[13px] font-normal" />
    </div>
  </div>
);

const Customer = () => (
  <div className="w-[430px] shrink-0 pt-[2px] text-[11px] text-black">
    <div className="flex">
      <label htmlFor="odbiorca" className="w-[46px] shrink-0 pt-[2px] text-[#0000c8]">Odbiorca</label>
      <div className="flex w-[192px] flex-col">
        <input id="odbiorca" defaultValue="Abacki Jan" className={`h-[19px] pl-[2px] ${SUNKEN}`} />
        <input aria-label="Odbiorca 2" className={`h-[19px] ${SUNKEN}`} />
        <input aria-label="Odbiorca 3" className={`h-[18px] ${SUNKEN}`} />
      </div>
      <div className="ml-px flex w-[191px] flex-col">
        <input aria-label="Adres" defaultValue="MiastoPr ul.Rynek 99" className={`h-[19px] pl-[2px] ${SUNKEN}`} />
        <input aria-label="Adres 2" className={`h-[19px] ${SUNKEN}`} />
        <div className="flex h-[18px]">
          <label htmlFor="nip" className="w-[38px] pt-px pl-[7px] text-[#0000c8]">NIP:</label>
          <input id="nip" className={`min-w-0 flex-1 ${SUNKEN}`} />
        </div>
      </div>
    </div>
    <div className="flex">
      <div className="flex w-[196px] shrink-0 flex-col gap-px">
        <div className="flex">
          <label htmlFor="kod" className="w-[47px] shrink-0 pt-[6px] text-[#0000c8]">Kod/Pkt</label>
          <input id="kod" className="h-[23px] w-[100px] border border-[#7f9db9] bg-[#80ff80]" />
          <input aria-label="Pkt odbiorcy" className={`ml-[2px] h-[23px] w-11 ${FLAT}`} />
        </div>
        <div className="flex">
          <label htmlFor="faktura" className="w-[47px] shrink-0 pt-[6px] whitespace-nowrap text-[#0000c8]">Nr faktury</label>
          <input id="faktura" className={`h-6 w-[149px] ${FLAT}`} />
        </div>
      </div>
      <div className="flex flex-1 flex-col">
        <div className="flex">
          <label htmlFor="punkt" className="w-[43px] pt-1 pl-2 text-[#0000c8]">Punkt</label>
          <div className="flex flex-1 flex-col">
            <input id="punkt" className={`h-4 ${SUNKEN}`} />
            <input aria-label="Punkt 2" className={`h-4 ${SUNKEN}`} />
          </div>
        </div>
        <div className="flex pt-[3px]">
          <label htmlFor="ksiazka" className="w-[73px] shrink-0 pl-[15px] whitespace-nowrap text-[#0000c8]">Nr ksiażki</label>
          <input id="ksiazka" defaultValue="4001" className={`h-4 w-[46px] ${FLAT}`} />
          <input aria-label="Pozycja" defaultValue="1" className={`ml-3 h-4 w-[46px] text-right ${FLAT}`} />
          <input aria-label="Symbol książki" defaultValue="SM" className={`h-4 w-[57px] pl-px ${FLAT}`} />
        </div>
      </div>
    </div>
  </div>
);

type BtnProps = { w: string; h?: string; color?: string; label?: string; children: ReactNode; ring?: string };
const Btn = ({ w, h = "h-6", color = "text-black", label, children, ring = "" }: BtnProps) => (
  <button
    type="button"
    aria-label={label}
    className={`flex shrink-0 items-center justify-center overflow-hidden rounded-[3px] border border-[#003c74] bg-linear-to-b from-white via-[#f5f4ef] to-[#e6e4da] text-[11px] leading-4 whitespace-nowrap ${w} ${h} ${color} ${ring}`}
  >
    {children}
  </button>
);

const ExitIcon = () => (
  <svg viewBox="0 0 32 22" className="h-[22px] w-8" fill="none" aria-hidden="true">
    <path d="M0 20.500h12M27 20.500h5" stroke="#000" strokeWidth="1.500" />
    <path d="M12 17h8v4h-8z" fill="#a0a0a0" />
    <path d="M11.500 0v20M11.500.500h14" stroke="#000" />
    <path d="M19 0h8v22h-8z" fill="#0000e0" />
    <path d="M19 0h2v22h-2z" fill="#40c8f0" />
    <path d="M19 0v22M27 0v21" stroke="#000" />
    <path d="M23 10v4" stroke="#fff" strokeWidth="1.500" />
    <path d="M1 5h9V1l7 7-7 7v-4H1z" fill="#1490e8" stroke="#000060" strokeWidth="1.300" />
    <path d="M2 9h9v3l5-4" stroke="#0000a0" strokeWidth="1.500" />
  </svg>
);
const EraserIcon = () => (
  <svg viewBox="0 0 30 22" className="h-[22px] w-[30px]" fill="none" aria-hidden="true">
    <path d="M.500 0v22" stroke="#808080" />
    <path d="M23.500 8v14" stroke="#000" />
    <path d="M3 2.500h6M3 5.500h4M3 8.500h3M16 15.500h7M14 18.500h8M17 21h5" stroke="#0000a0" strokeDasharray="4 1" />
    <path d="m14 2 9-1 4 0-1 4-9 11-6-3z" fill="#1a2a80" />
    <path d="m13 2 7 1 1 5-6 8-6 1-3-4z" fill="#20d8e0" stroke="#003050" strokeWidth="1.200" />
    <path d="m9 10 5 5M10 7l4-4" stroke="#e8ffff" strokeWidth="1.500" />
    <path d="m18 13 8-10" stroke="#b0c8d0" strokeWidth="1.500" strokeDasharray="2 1" />
  </svg>
);
const PrintBw = () => (
  <svg viewBox="0 0 18 16" className="h-4 w-[18px]" fill="none" aria-hidden="true">
    <path d="M6 1.500h9L12.500 7H4z" fill="#fff" stroke="#000" />
    <path d="M7 3.500h5M6 5.500h5" stroke="#000" />
    <path d="M1.500 7.500h13l2-2v6l-3 3.500H3l-1.500-2z" fill="#d8d8d8" stroke="#000" strokeWidth="1.200" />
    <path d="M2 10.500h12M14 10l3-4M4 13h9" stroke="#000" />
    <path d="M9 12h3" stroke="#e8d800" strokeWidth="1.300" />
  </svg>
);
const PreviewBw = () => (
  <svg viewBox="0 0 17 17" className="size-[17px]" fill="none" aria-hidden="true">
    <path d="M1.500 1.500h8l3 3v11h-11z" fill="#fff" stroke="#000" />
    <path d="M9.500 1.500v3h3" stroke="#000" />
    <circle cx="9.500" cy="9" r="3.500" fill="#a8f0f4" stroke="#000" />
    <path d="m12 11.500 4 4" stroke="#000" strokeWidth="2.200" />
  </svg>
);

const Actions = () => (
  <div className="ml-[11px] flex w-[364px] shrink-0 flex-col gap-[3px]">
    <div className="flex w-[362px] justify-between">
      <Btn w="w-[58px]" label="Tabela" ring="shadow-[inset_0_0_0_2px_#b4cbf3,inset_0_-3px_0_#8fb0ee] !items-stretch">
        <span className="my-[2px] ml-[2px] w-5 border-r border-l border-r-black border-l-[#808080]" />
      </Btn>
      <Btn w="w-[70px]" color="text-[#004040]">Parametry</Btn>
      <Btn w="w-[63px]" color="text-[#993300]">Wymiana</Btn>
      <Btn w="w-[55px]" label="Wyjście"><ExitIcon /></Btn>
      <Btn w="w-[93px]" color="text-[#800000]">Kontrola odczytu</Btn>
    </div>
    <div className="flex w-[362px] justify-between">
      <Btn w="w-[58px]" label="Wyczyść"><EraserIcon /></Btn>
      <Btn w="w-[70px]" color="text-[#800080]">Wg ks.przyg.</Btn>
      <Btn w="w-[63px]" color="text-[#c00000]"><span><u>K</u>artoteka</span></Btn>
      <Btn w="w-[55px]" color="text-[#0000d0]">Faktury</Btn>
      <Btn w="w-[93px]" color="text-[#800080]">Techniczne</Btn>
    </div>
    <div className="flex w-[362px] items-start">
      <Btn w="w-[58px]" color="text-[#0000f0]"><span><u>P</u>odliczniki</span></Btn>
      <span className="ml-[6px] flex"><Btn w="w-[70px]" color="text-[#0000f0]">Oblicz</Btn></span>
      <span className="ml-[6px] flex"><Btn w="w-8" label="Drukuj"><PrintBw /></Btn></span>
      <span className="ml-[2px] flex"><Btn w="w-7" label="Podgląd wydruku"><PreviewBw /></Btn></span>
      <label className="ml-px flex items-start gap-1 text-[11px] leading-[13px] font-['Open_Sans',sans-serif] text-[#222]">
        <input type="checkbox" className="size-[13px] appearance-none border border-[#1c5180] bg-linear-to-br from-[#dcdcd7] to-white" />
        A4
      </label>
      <span className="ml-auto flex"><Btn w="w-[92px]">wydruk powtórny</Btn></span>
    </div>
    <div className="-ml-px flex items-start pt-px">
      <Btn w="w-[83px]" h="h-5" color="font-bold text-[#0000f0]">Zatwierdzam</Btn>
      <span className="ml-1 flex"><Btn w="w-6" h="h-[22px]" color="text-[#5a10a8]" ring="shadow-[inset_0_0_0_2px_#f3b64c]"><u>Z</u></Btn></span>
      <span className="ml-[6px] flex"><Btn w="w-6" h="h-[22px]" color="text-[#5a10a8]"><u>D</u></Btn></span>
      <span className="ml-[3px] flex"><Btn w="w-[22px]" h="h-[22px]" color="text-[#5a10a8]"><u>O</u></Btn></span>
      <Btn w="w-[23px]" h="h-[22px]" color="text-[#5a10a8]"><u>K</u></Btn>
      <Btn w="w-[35px]" h="h-[22px]" color="text-[#5a10a8]"><span><u>w_</u>K</span></Btn>
      <span className="ml-px flex"><Btn w="w-[57px]" h="h-[22px]" color="text-[#f00000]">Uzg. odc.</Btn></span>
      <span className="ml-[2px] flex"><Btn w="w-20" h="h-[22px]" color="text-[#800080]">Zestawienia</Btn></span>
    </div>
  </div>
);

const Reports = () => (
  <div className="ml-[4px] flex gap-px">
    <div className="flex flex-col gap-[2px]">
      <Btn w="w-[108px]" color="text-[#3366ff]">Liczniki</Btn>
      <Btn w="w-[108px]" h="h-[25px]" color="text-[#800000]">S.odczyty</Btn>
      <Btn w="w-[108px]" color="text-[#800000]">S.zużycia</Btn>
      <Btn w="w-[108px]" h="h-[25px]" color="text-[#800000]">S..sprzedaż</Btn>
    </div>
    <div className="flex flex-col gap-[2px]">
      <Btn w="w-[108px]" color="text-[#3366ff]">Kontrole</Btn>
      <Btn w="w-[108px]" h="h-[25px]" color="text-[#800000]">S.faktury</Btn>
      <Btn w="w-[108px]" color="text-[#800000]">S.odbiorcy</Btn>
      <Btn w="w-[108px]" h="h-[25px]" color="text-[#800000]">S..punkty</Btn>
    </div>
    <div className="flex flex-col gap-[2px]">
      <Btn w="w-[108px]" color="text-[#800000]">Umowy</Btn>
      <Btn w="w-[108px]" h="h-[25px]" color="text-[#0000f0]">Odczyty - wg.książki</Btn>
      <Btn w="w-[108px]" color="text-[#0000f0]">Odczyty - dowolna</Btn>
      <Btn w="w-[84px]" h="h-[21px]">Komunikaty</Btn>
    </div>
    <div className="ml-[3px] flex flex-col gap-[2px] pt-[26px]">
      <Btn w="w-[86px]" h="h-[25px]">odczyty HTC</Btn>
      <Btn w="w-[90px]">Według książki</Btn>
    </div>
  </div>
);

/* ---------- record navigation ---------- */
const NavGlyph = ({ d, label, off, w }: { d: string; label: string; off?: boolean; w: string }) => (
  <button type="button" aria-label={label} disabled={off} className={`flex shrink-0 items-center justify-center ${w}`}>
    <svg viewBox="0 0 8 8" className="size-2" aria-hidden="true">
      <path d={d} fill={off ? "#9fb6d8" : "#15428b"} />
    </svg>
  </button>
);

const NavBar = () => (
  <footer className={`flex h-[18px] shrink-0 border-t border-[#6593cf] bg-linear-to-b from-[#e4efff] to-[#c8ddfb] text-[11px] leading-4 text-[#15428b] ${RIBBON_FONT}`}>
    <div className="flex w-[186px] shrink-0 items-center border-r border-[#6593cf] pl-[3px]">
      <label htmlFor="rekord" className="w-[42px]">Rekord:</label>
      <NavGlyph label="Pierwszy rekord" w="w-4" d="M1 0h1.500v8H1zM7 0v8L3 4z" />
      <NavGlyph label="Poprzedni rekord" w="w-[17px]" off d="M6 0v8L2 4z" />
      <input id="rekord" defaultValue="1 z 1" className="h-[15px] w-[50px] border border-[#a3bfe4] bg-[#eef4fd] pl-px text-black" />
      <NavGlyph label="Następny rekord" w="w-[21px]" d="M2 0v8l4.500-4z" />
      <NavGlyph label="Ostatni rekord" w="w-[14px]" d="M1 0v8l4-4zM5.500 0H7v8H5.500z" />
      <button type="button" aria-label="Nowy rekord" className="flex w-5 items-center justify-center">
        <svg viewBox="0 0 11 8" className="h-2 w-[11px]" fill="none" aria-hidden="true">
          <path d="M0 0v8l4-4z" fill="#15428b" />
          <path d="M7.500 0v8M4.500 4h6M5.500 1.500l4.500 5M10 1.500l-4.500 5" stroke="#e9b93a" />
        </svg>
      </button>
    </div>
    <button type="button" disabled className="flex w-[81px] shrink-0 items-center gap-[2px] border-r border-[#6593cf] pl-2 text-[#8e9bb0]">
      <FilterX />
      Bez filtru
    </button>
    <div className="flex w-[99px] shrink-0 items-center border-r border-[#6593cf] pl-[5px]">
      <input aria-label="Wyszukaj" defaultValue="Wyszukaj" className="h-[15px] w-[70px] border border-[#a3bfe4] bg-[#eef4fd] pl-px text-black" />
    </div>
    <div className="flex min-w-0 flex-1 bg-linear-to-b from-[#fafcff] to-[#e0e8f4]">
      <NavGlyph label="Przewiń w lewo" w="w-[17px]" d="M6 0v8L2 4z" />
      <div className="mt-px flex h-[15px] flex-1 items-center justify-center rounded-l-xs border border-r-0 border-[#5a6f9c] bg-linear-to-b from-[#f1f4f9] from-40% to-[#b4c2d6] to-60%">
        <svg viewBox="0 0 7 6" className="h-[6px] w-[7px]" aria-hidden="true">
          <path d="M.500 0v6M2.500 0v6M4.500 0v6M6.500 0v6" stroke="#6f7f9c" />
        </svg>
      </div>
    </div>
  </footer>
);

/* ---------- page ---------- */
export default function App() {
  return (
    <div className="relative flex min-h-screen flex-col overflow-hidden bg-[#ece9d8] font-['Liberation_Sans',Arial,sans-serif]">
      <div className={RIBBON_FONT}>
        <TitleBar />
        <RibbonTabs />
        <Ribbon />
        <div className="flex h-[26px] items-end border-b border-[#5d8ac8] bg-[#87a9d6]">
          <DocTab label="Kartoteka Lokatorów" w="w-[147px]" />
          <DocTab label="Zaliczki" w="w-[77px]" next />
          <DocTab label="Nanosz odczyty" w="w-[125px]" active next />
        </div>
        <button
          type="button"
          aria-label="Przycisk pakietu Office"
          className="absolute top-[2px] left-[2px] flex size-[37px] items-center justify-center rounded-full border border-[#8895a8] bg-radial-[at_50%_30%] from-white via-[#dfe4ec] to-[#b4bfce] shadow-[0_0_0_1px_#e9eef5,0_1px_2px_1px_#7d8da8]"
        >
          <OfficeLogo />
        </button>
      </div>
      <main className="flex flex-1 flex-col overflow-hidden">
        <FormHeader />
        <div className="pt-[2px]">
          <Record current />
          <Record />
        </div>
        <div className="mt-auto pb-[10px]">
          <div className="mb-px ml-7 h-px w-[760px] bg-black" />
          <EditStrip />
          <div className="flex items-start pt-[6px] pl-[26px]">
            <Customer />
            <Actions />
            <Reports />
          </div>
        </div>
      </main>
      <NavBar />
    </div>
  );
}
